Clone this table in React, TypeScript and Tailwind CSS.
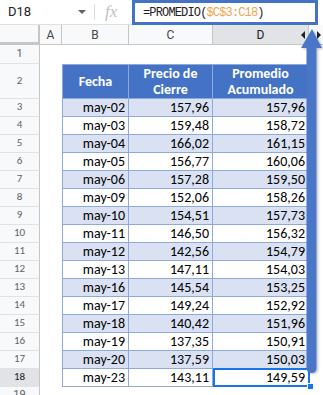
const data: [string, string, string][] = [
  ["may-02", "157,96", "157,96"],
  ["may-03", "159,48", "158,72"],
  ["may-04", "166,02", "161,15"],
  ["may-05", "156,77", "160,06"],
  ["may-06", "157,28", "159,50"],
  ["may-09", "152,06", "158,26"],
  ["may-10", "154,51", "157,73"],
  ["may-11", "146,50", "156,32"],
  ["may-12", "142,56", "154,79"],
  ["may-13", "147,11", "154,03"],
  ["may-16", "145,54", "153,25"],
  ["may-17", "149,24", "152,92"],
  ["may-18", "140,42", "151,96"],
  ["may-19", "137,35", "150,91"],
  ["may-20", "137,59", "150,03"],
  ["may-23", "143,11", "149,59"],
];

const RowHead = ({ n, active = false }: { n: number; active?: boolean }) => (
  <div
    className={`w-[40px] shrink-0 flex items-center justify-center border-r border-b border-r-[#c4c7c5] border-b-[#e2e2e2] text-[11px] ${
      active ? "bg-[#e1e3e6] text-[#202124]" : "bg-[#f8f9fa] text-[#5f6368]"
    }`}
  >
    {n}
  </div>
);

const App = () => {
  return (
    <div className="relative w-[323px] h-[395px] overflow-hidden bg-white font-['Roboto',sans-serif]">
      {/* Formula bar */}
      <div className="flex h-[25px]">
        <div className="flex items-center w-[94px] border-b border-[#e0e0e0] pl-[8px] pr-[8px]">
          <span className="text-[13px] text-[#202124] flex-1">D18</span>
          <span className="w-0 h-0 border-l-[4px] border-r-[4px] border-t-[4px] border-l-transparent border-r-transparent border-t-[#5f6368]" />
        </div>
        <div className="flex items-center w-[38px] border-b border-[#e0e0e0]">
          <div className="w-px h-[16px] bg-[#dadce0]" />
          <span className="ml-[10px] text-[17px] italic text-[#bdc1c6] font-['Liberation_Serif',serif]">
            fx
          </span>
        </div>
        <div className="flex items-center flex-1 mr-[5px] border-[3px] border-[#4472c4] pl-[8px] font-['Liberation_Mono',monospace] text-[12px] tracking-[-0.85px] text-[#202124]">
          <span>=PROMEDIO(</span>
          <span className="text-[#f4a24a]">$C$3:C18</span>
          <span>)</span>
        </div>
      </div>

      {/* Column headers */}
      <div className="flex h-[20px] text-[12px] text-[#444746]">
        <div className="w-[40px] shrink-0 bg-[#f8f9fa] border-r-2 border-b-[3px] border-[#c4c7c5]" />
        <div className="w-[22px] shrink-0 flex items-center justify-center bg-[#f8f9fa] border-r border-b border-[#c4c7c5]">A</div>
        <div className="w-[67px] shrink-0 flex items-center justify-center bg-[#f8f9fa] border-r border-b border-[#c4c7c5]">B</div>
        <div className="w-[84px] shrink-0 flex items-center justify-center bg-[#f8f9fa] border-r border-b border-[#c4c7c5]">C</div>
        <div className="w-[96px] shrink-0 flex items-center justify-center bg-[#e1e3e6] border-r border-b border-[#c4c7c5] text-[#202124]">D</div>
        <div className="flex-1 bg-[#f8f9fa] border-b border-[#c4c7c5]" />
      </div>

      {/* Row 1 */}
      <div className="flex h-[19px]">
        <RowHead n={1} />
        <div className="flex-1" />
      </div>

      {/* Row 2: table header */}
      <div className="flex h-[35px] font-['Carlito','Lato',sans-serif] text-[14px] leading-[16px]">
        <RowHead n={2} />
        <div className="w-[22px] shrink-0" />
        <div className="w-[67px] shrink-0 flex items-center justify-center text-center bg-[#4472c4] text-white font-bold border border-[#8ea9db]">
          Fecha
        </div>
        <div className="w-[84px] shrink-0 flex items-center justify-center text-center bg-[#4472c4] text-white font-bold border-y border-r border-[#8ea9db]">
          Precio de
          <br />
          Cierre
        </div>
        <div className="w-[96px] shrink-0 flex items-center justify-center text-center bg-[#4472c4] text-white font-bold border-y border-r border-[#8ea9db]">
          Promedio
          <br />
          Acumulado
        </div>
        <div className="flex-1" />
      </div>

      {/* Data rows */}
      {data.map(([fecha, precio, prom], i) => {
        const shade = i % 2 === 0 ? "bg-[#d9e1f2]" : "bg-white";
        return (
          <div key={fecha} className="flex h-[18px] font-['Carlito','Lato',sans-serif] text-[14px] text-black">
            <RowHead n={i + 3} active={i === 15} />
            <div className="w-[22px] shrink-0" />
            <div className={`w-[67px] shrink-0 flex items-center justify-end pr-[3px] border-x border-b border-[#8ea9db] ${shade}`}>
              {fecha}
            </div>
            <div className={`w-[84px] shrink-0 flex items-center justify-end pr-[3px] border-r border-b border-[#8ea9db] ${shade}`}>
              {precio}
            </div>
            <div className={`w-[96px] shrink-0 flex items-center justify-end pr-[3px] border-r border-b border-[#8ea9db] ${shade}`}>
              {prom}
            </div>
            <div className="flex-1" />
          </div>
        );
      })}

      {/* Row 19 */}
      <div className="flex h-[18px]">
        <RowHead n={19} />
        <div className="flex-1" />
      </div>

      {/* Selected cell D18 */}
      <div className="absolute left-[213px] top-[368px] w-[97px] h-[19px] border-2 border-[#1a73e8]" />
      <div className="absolute left-[307px] top-[383px] w-[7px] h-[7px] bg-[#1a73e8] border border-white" />

      {/* Column resize handle */}
      <svg className="absolute left-[301px] top-[31px]" width="20" height="8" viewBox="0 0 20 8">
        <path d="M0 4 L4 0 L4 8 Z" fill="#202124" />
        <path d="M20 4 L16 0 L16 8 Z" fill="#202124" />
      </svg>

      {/* Annotation arrow */}
      <svg className="absolute left-[298px] top-[28px]" width="25" height="348" viewBox="0 0 25 348">
        <defs>
          <filter id="sh" x="-50%" y="-5%" width="200%" height="110%">
            <feDropShadow dx="1.5" dy="1" stdDeviation="1" floodColor="#000" floodOpacity="0.25" />
          </filter>
        </defs>
        <g filter="url(#sh)">
          <path d="M14 1 L24 20 L18.5 20 L18.5 340 Q18.5 345 13.5 345 Q8.5 345 8.5 340 L8.5 20 L3 20 Z" fill="#4a76c6" />
        </g>
      </svg>
    </div>
  );
};

export default App;
